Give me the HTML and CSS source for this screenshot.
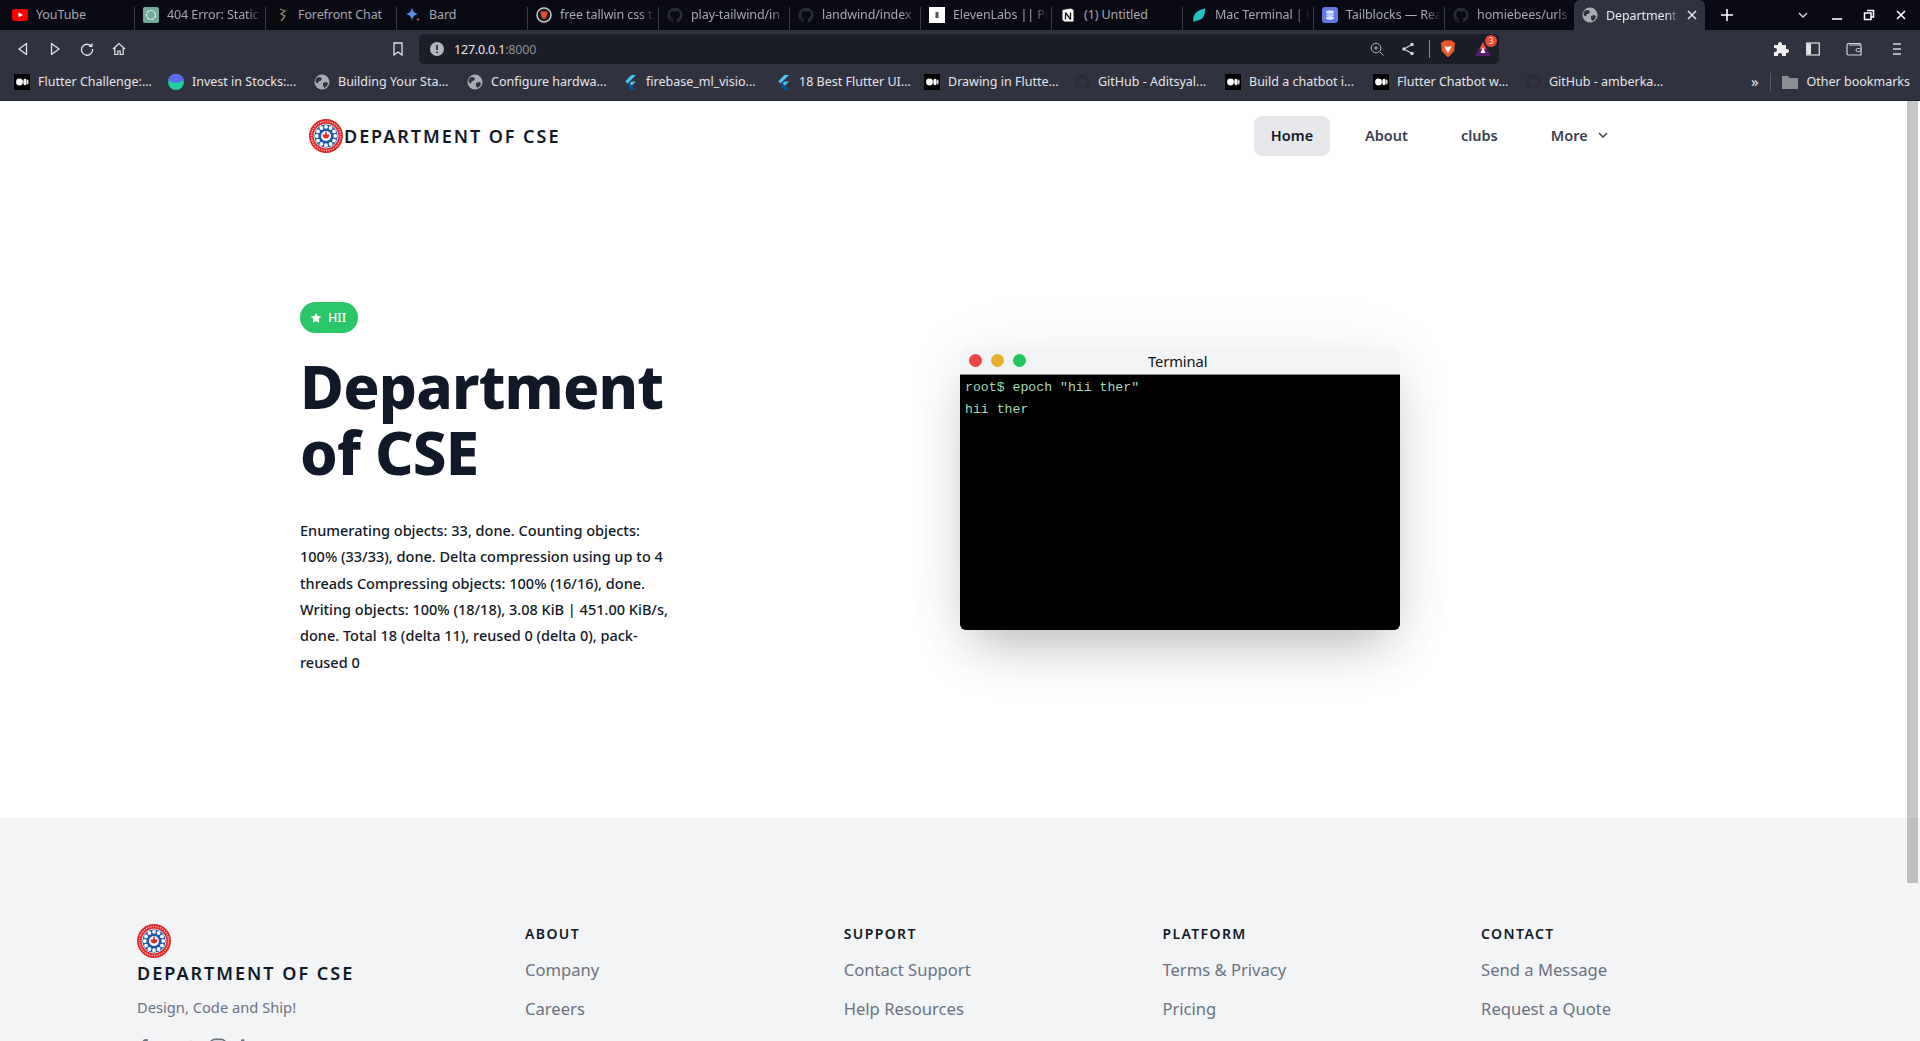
FILE: index.html
```html
<!DOCTYPE html>
<html lang="en">
<head>
<meta charset="utf-8">
<title>Department of CSE</title>
<link rel="stylesheet" href="styles.css">
</head>
<body>
<svg class="defs" aria-hidden="true">
  <defs>
    <symbol id="globe" viewBox="0 0 16 16"><circle cx="8" cy="8" r="7.5" fill="#a9abb2"/><path d="M3 3.5l3-.5 2 1.500-1 2-2.500 1-.5 2L2 8.500 1.500 6zM9 9l3-1 2 1-1 3-2.500 2L9 12z" fill="#30323f"/></symbol>
    <symbol id="github" viewBox="0 0 16 16"><path fill="#2a2c36" d="M8 .5a7.700 7.700 0 0 0-2.400 15c.4.100.5-.2.500-.4v-1.300c-2.100.5-2.600-1-2.600-1-.4-.9-.9-1.100-.9-1.100-.7-.5.100-.5.100-.5.800.100 1.200.8 1.200.8.700 1.200 1.800.8 2.300.6 0-.5.300-.9.500-1.100-1.700-.2-3.500-.9-3.500-3.800 0-.8.300-1.500.8-2-.1-.2-.3-1 .1-2 0 0 .6-.2 2.100.8a7.300 7.300 0 0 1 3.800 0c1.500-1 2.100-.8 2.100-.8.400 1 .2 1.800.1 2 .5.500.8 1.200.8 2 0 2.900-1.800 3.600-3.500 3.800.3.200.5.700.5 1.400v2.100c0 .2.100.5.500.4A7.700 7.700 0 0 0 8 .5z"/></symbol>
    <symbol id="medium" viewBox="0 0 16 16"><rect width="16" height="16" fill="#000"/><circle cx="5.500" cy="8" r="3.400" fill="#fff"/><ellipse cx="11" cy="8" rx="1.700" ry="3.200" fill="#fff"/><ellipse cx="13.800" cy="8" rx=".7" ry="2.800" fill="#fff"/></symbol>
    <symbol id="flutter" viewBox="0 0 16 16"><path d="M9.500 1h4.500L5.500 9.500 3.300 7.300z" fill="#47c5fb"/><path d="M9.500 7.500h4.500L9.800 11.700l-2.200-2.200z" fill="#47c5fb"/><path d="M7.600 9.500l2.200 2.200L14 16H9.500L5.500 11.700z" fill="#00569e"/></symbol>
    <symbol id="dept-logo" viewBox="0 0 34 34">
      <circle cx="17" cy="17" r="17" fill="#e02a2a"/>
      <circle cx="17" cy="17" r="14.600" fill="none" stroke="#f6c5c5" stroke-width="1.400" stroke-dasharray="1.200 1.200"/>
      <circle cx="17" cy="17" r="12" fill="#1a5ba8" stroke="#fff" stroke-width=".8"/>
      <g fill="#fff">
        <circle cx="17" cy="7.800" r="1.900"/><circle cx="21.600" cy="9" r="1.900"/><circle cx="25" cy="12.400" r="1.900"/><circle cx="26.200" cy="17" r="1.900"/><circle cx="25" cy="21.600" r="1.900"/><circle cx="21.600" cy="25" r="1.900"/><circle cx="17" cy="26.200" r="1.900"/><circle cx="12.400" cy="25" r="1.900"/><circle cx="9" cy="21.600" r="1.900"/><circle cx="7.800" cy="17" r="1.900"/><circle cx="9" cy="12.400" r="1.900"/><circle cx="12.400" cy="9" r="1.900"/>
        <circle cx="17" cy="17" r="5" />
      </g>
      <path d="M13.500 15.500h7c0 2.500-1.500 4-3.500 4s-3.500-1.500-3.500-4zM16.200 12.500h1.600v3h-1.600z" fill="#e02a2a"/>
    </symbol>
  </defs>
</svg>

<div class="window">
  <div class="tabbar">
    <div class="tab">
      <svg class="fav" viewBox="0 0 16 16"><rect y="2" width="16" height="12" rx="3" fill="#f00"/><path d="M6.500 5.500L11 8l-4.500 2.500z" fill="#fff"/></svg>
      <span class="tab-title">YouTube</span>
    </div>
    <div class="tab">
      <svg class="fav" viewBox="0 0 16 16"><rect width="16" height="16" rx="2" fill="#74aa9c"/><circle cx="8" cy="8" r="4.500" fill="none" stroke="#e8f3f0" stroke-width="1.200" stroke-dasharray="3 1"/></svg>
      <span class="tab-title tab-fade">404 Error: Static</span>
    </div>
    <div class="tab">
      <svg class="fav" viewBox="0 0 16 16"><rect width="16" height="16" fill="#0a0a0a"/><path d="M6 2l5 2-4 3 4 2-4 5" fill="none" stroke="#8b8b80" stroke-width="1.300"/></svg>
      <span class="tab-title">Forefront Chat</span>
    </div>
    <div class="tab">
      <svg class="fav" viewBox="0 0 16 16"><path d="M7 0c.6 4 2 6 6 7-4 1-5.400 3-6 7-.6-4-2-6-6-7 4-1 5.400-3 6-7z" fill="#5b8def"/><path d="M13 10.500c.2 1.300.7 1.800 2 2-1.300.2-1.800.7-2 2-.2-1.300-.7-1.800-2-2 1.300-.2 1.800-.7 2-2z" fill="#d96570"/></svg>
      <span class="tab-title">Bard</span>
    </div>
    <div class="tab">
      <svg class="fav" viewBox="0 0 16 16"><circle cx="8" cy="8" r="7" fill="#1b1b22" stroke="#c9c9c9" stroke-width="1.500"/><path d="M4.500 4.500h7l-.8 5L8 12.500 5.300 9.500z" fill="#e8502f"/></svg>
      <span class="tab-title tab-fade">free tallwin css t</span>
    </div>
    <div class="tab">
      <svg class="fav"><use href="#github"/></svg>
      <span class="tab-title tab-fade">play-tailwind/in</span>
    </div>
    <div class="tab">
      <svg class="fav"><use href="#github"/></svg>
      <span class="tab-title tab-fade">landwind/index</span>
    </div>
    <div class="tab">
      <svg class="fav" viewBox="0 0 16 16"><rect width="16" height="16" fill="#fff"/><rect x="6.500" y="5" width="3" height="6" fill="#555"/></svg>
      <span class="tab-title tab-fade">ElevenLabs || Pr</span>
    </div>
    <div class="tab">
      <svg class="fav" viewBox="0 0 16 16"><path d="M2 2.500L11 1l3 2v12H4L2 12.500z" fill="#fff" stroke="#111"/><path d="M5.500 5.500v7M5.500 5.500l5 7M10.500 5.500v7" stroke="#111" stroke-width="1.300" fill="none"/></svg>
      <span class="tab-title">(1) Untitled</span>
    </div>
    <div class="tab">
      <svg class="fav" viewBox="0 0 16 16"><path d="M14 1.500c.5 7-2.500 12-9.500 12.500l-2 1C1 9 5 3 14 1.500z" fill="#21c4c0"/></svg>
      <span class="tab-title tab-fade">Mac Terminal | P</span>
    </div>
    <div class="tab">
      <svg class="fav" viewBox="0 0 16 16"><rect width="16" height="16" rx="3" fill="#6478e8"/><ellipse cx="8" cy="5" rx="4" ry="1.800" fill="#dfe4ff"/><ellipse cx="8" cy="8" rx="4" ry="1.800" fill="#b6c0fb"/><ellipse cx="8" cy="11" rx="4" ry="1.800" fill="#dfe4ff"/></svg>
      <span class="tab-title tab-fade">Tailblocks — Rea</span>
    </div>
    <div class="tab tab-last">
      <svg class="fav"><use href="#github"/></svg>
      <span class="tab-title tab-fade">homiebees/urls</span>
    </div>
    <div class="tab tab-active">
      <svg class="fav"><use href="#globe"/></svg>
      <span class="tab-title tab-fade">Department</span>
      <svg class="tab-close" viewBox="0 0 10 10"><path d="M1 1l8 8M9 1l-8 8" stroke="#e6e6ea" stroke-width="1.500"/></svg>
    </div>
    <svg class="tab-plus" viewBox="0 0 12 12"><path d="M6 0v12M0 6h12" stroke="#fff" stroke-width="1.600"/></svg>
    <div class="window-controls">
      <svg class="wc wc-down" viewBox="0 0 12 12"><path d="M2 4l4 4 4-4" fill="none" stroke="#d8d8dc" stroke-width="1.400"/></svg>
      <svg class="wc" viewBox="0 0 12 12"><path d="M1 10h10" stroke="#fff" stroke-width="1.600"/></svg>
      <svg class="wc" viewBox="0 0 12 12"><path d="M4 1.500h6.500V8H8M1.500 4H8v6.500H1.500z" fill="none" stroke="#fff" stroke-width="1.500"/></svg>
      <svg class="wc" viewBox="0 0 12 12"><path d="M2 2l8 8M10 2l-8 8" stroke="#fff" stroke-width="1.600"/></svg>
    </div>
  </div>

  <div class="toolbar">
    <div class="nav-icons">
      <svg class="tool" viewBox="0 0 14 14"><path d="M10.500 1.500v11L3 7z" fill="none" stroke="#e4e4e8" stroke-width="1.300" stroke-linejoin="round"/></svg>
      <svg class="tool" viewBox="0 0 14 14"><path d="M3.500 1.500v11L11 7z" fill="none" stroke="#e4e4e8" stroke-width="1.300" stroke-linejoin="round"/></svg>
      <svg class="tool" viewBox="0 0 14 14"><path d="M11.500 4.500A5.500 5.500 0 1 0 12.500 7" fill="none" stroke="#e4e4e8" stroke-width="1.300"/><path d="M12.500 1v4h-4z" fill="#e4e4e8"/></svg>
      <svg class="tool" viewBox="0 0 14 14"><path d="M1 7l6-5.500L13 7M2.800 6v6.500h3V9h2.400v3.500h3V6" fill="none" stroke="#e4e4e8" stroke-width="1.200"/></svg>
    </div>
    <svg class="bookmark-icon" viewBox="0 0 12 14"><path d="M2 1h8v12L6 10l-4 3z" fill="none" stroke="#e4e4e8" stroke-width="1.300"/></svg>
    <div class="urlbar">
      <svg class="url-info" viewBox="0 0 14 14"><circle cx="7" cy="7" r="7" fill="#b5b6bc"/><path d="M6.200 3h1.600v5H6.200zM6.200 9.400h1.600V11H6.200z" fill="#1b1d27"/></svg>
      <span class="url-text">127.0.0.1<span class="url-port">:8000</span></span>
      <svg class="url-tool url-zoom" viewBox="0 0 14 14"><circle cx="6" cy="6" r="4.800" fill="none" stroke="#aeb0b6"/><path d="M9.500 9.500L13.500 13.500M4 6h4M6 4v4" stroke="#aeb0b6"/></svg>
      <svg class="url-tool url-share" viewBox="0 0 14 14"><path d="M11 2.500L3 7l8 4.500" fill="none" stroke="#d0d1d6" stroke-width="1.200"/><circle cx="11" cy="2.500" r="1.800" fill="#d0d1d6"/><circle cx="3" cy="7" r="1.800" fill="#d0d1d6"/><circle cx="11" cy="11.500" r="1.800" fill="#d0d1d6"/></svg>
      <span class="url-sep"></span>
      <svg class="brave" viewBox="0 0 16 18"><path d="M4 .5h8l1 1.500 2 .5-.8 8.500L8 17.500 1.800 11 1 2.500 3 2z" fill="#ef5a2a"/><path d="M4.500 6L8 7l3.500-1L10 10l-2 3-2-3z" fill="#fff"/></svg>
      <div class="bat">
        <svg class="bat-icon" viewBox="0 0 18 16"><path d="M9 1l8 14H1z" fill="#5b1c6e"/><path d="M9 1l3.500 7h-7z" fill="#ef4b35"/><path d="M9 6l2.500 6h-5z" fill="#fff"/></svg>
        <span class="bat-badge">3</span>
      </div>
    </div>
    <svg class="tool-right tr-ext" viewBox="0 0 16 16"><path d="M1 4h4V3a2 2 0 0 1 4 0v1h4v4h1a2 2 0 0 1 0 4h-1v3H9v-1a2 2 0 0 0-4 0v1H1v-4h1a2 2 0 0 0 0-4H1z" fill="#eeeef0"/></svg>
    <svg class="tool-right tr-side" viewBox="0 0 14 14"><rect x=".7" y="1" width="12.600" height="12" fill="none" stroke="#e4e4e8" stroke-width="1.200"/><rect x="1" y="1.500" width="4" height="11" fill="#e4e4e8"/></svg>
    <svg class="tool-right tr-wallet" viewBox="0 0 16 14"><path d="M14 3V1.500H2.500A1.500 1.500 0 0 0 1 3v8.500A1.500 1.500 0 0 0 2.500 13H15V3H3" fill="none" stroke="#d4d4d8" stroke-width="1.200"/><rect x="10" y="6.500" width="5" height="3" rx="1.500" fill="#30323f" stroke="#d4d4d8"/></svg>
    <svg class="tool-right tr-menu" viewBox="0 0 10 14"><path d="M1 2h8M1 7h8M1 12h8" stroke="#d4d4d8" stroke-width="1.300"/></svg>
  </div>

  <div class="bookmarks">
    <div class="bm bm-1"><svg class="fav"><use href="#medium"/></svg><span>Flutter Challenge:...</span></div>
    <div class="bm bm-2"><svg class="fav" viewBox="0 0 16 16"><circle cx="8" cy="8" r="8" fill="#20d0a0"/><path d="M0 8a8 8 0 0 1 16 0c-3-3-4 1-8 1S3 6 0 8z" fill="#5a6bf0"/></svg><span>Invest in Stocks:...</span></div>
    <div class="bm bm-3"><svg class="fav"><use href="#globe"/></svg><span>Building Your Sta...</span></div>
    <div class="bm bm-4"><svg class="fav"><use href="#globe"/></svg><span>Configure hardwa...</span></div>
    <div class="bm bm-5"><svg class="fav"><use href="#flutter"/></svg><span>firebase_ml_visio...</span></div>
    <div class="bm bm-6"><svg class="fav"><use href="#flutter"/></svg><span>18 Best Flutter UI...</span></div>
    <div class="bm bm-7"><svg class="fav"><use href="#medium"/></svg><span>Drawing in Flutte...</span></div>
    <div class="bm bm-8"><svg class="fav"><use href="#github"/></svg><span>GitHub - Aditsyal...</span></div>
    <div class="bm bm-9"><svg class="fav"><use href="#medium"/></svg><span>Build a chatbot i...</span></div>
    <div class="bm bm-10"><svg class="fav"><use href="#medium"/></svg><span>Flutter Chatbot w...</span></div>
    <div class="bm bm-11"><svg class="fav"><use href="#github"/></svg><span>GitHub - amberka...</span></div>
    <div class="bm-end">
      <span class="bm-more">»</span>
      <span class="bm-sep"></span>
      <svg class="fav" viewBox="0 0 16 16"><path d="M0 2h6l1.500 2H16v11H0z" fill="#8c8d92"/></svg>
      <span>Other bookmarks</span>
    </div>
  </div>

  <div class="page">
    <header class="site-nav">
      <a class="brand">
        <svg class="brand-logo"><use href="#dept-logo"/></svg>
        <span class="brand-name">DEPARTMENT OF CSE</span>
      </a>
      <nav class="site-links">
        <a class="site-link is-current">Home</a>
        <a class="site-link link-about">About</a>
        <a class="site-link link-clubs">clubs</a>
        <a class="site-link link-more">More
          <svg class="chev" viewBox="0 0 10 6"><path d="M1 1l4 4 4-4" fill="none" stroke="#374151" stroke-width="1.500"/></svg>
        </a>
      </nav>
    </header>

    <main class="hero">
      <section class="hero-copy">
        <span class="pill">
          <svg class="pill-star" viewBox="0 0 14 14"><path d="M7 .8l1.900 3.900 4.300.6-3.100 3 .7 4.300L7 10.600l-3.800 2 .7-4.300-3.100-3 4.300-.6z" fill="#fff"/></svg>
          HII
        </span>
        <h1 class="hero-title">Department of CSE</h1>
        <p class="hero-text">Enumerating objects: 33, done. Counting objects: 100% (33/33), done. Delta compression using up to 4 threads Compressing objects: 100% (16/16), done. Writing objects: 100% (18/18), 3.08 KiB | 451.00 KiB/s, done. Total 18 (delta 11), reused 0 (delta 0), pack-reused 0</p>
      </section>
      <section class="terminal">
        <div class="term-bar">
          <div class="term-dots">
            <span class="dot dot-red"></span>
            <span class="dot dot-yellow"></span>
            <span class="dot dot-green"></span>
          </div>
          <span class="term-title">Terminal</span>
        </div>
        <div class="term-body">
          <p class="term-line">root$ epoch "hii ther"</p>
          <p class="term-line">hii ther</p>
        </div>
      </section>
    </main>

    <footer class="site-footer">
      <div class="foot-brand">
        <svg class="brand-logo"><use href="#dept-logo"/></svg>
        <div class="foot-name">DEPARTMENT OF CSE</div>
        <p class="foot-tag">Design, Code and Ship!</p>
        <div class="socials">
          <svg class="social social-first" viewBox="0 0 20 20"><path d="M12 1h-2a4 4 0 0 0-4 4v3H4v3h2v8h3v-8h3l.5-3H9V5a1 1 0 0 1 1-1h2z" fill="#6b7280"/></svg>
          <svg class="social" viewBox="0 0 20 20"><path d="M19 4c-.7.3-1.400.5-2 .6A3.600 3.600 0 0 0 10.800 8 10 10 0 0 1 3 4s-3 6 4 10a10 10 0 0 1-6 2c9 5 18 0 18-11z" fill="#6b7280"/></svg>
          <svg class="social" viewBox="0 0 20 20"><rect x="1.500" y="1.500" width="17" height="17" rx="5" fill="none" stroke="#6b7280" stroke-width="2"/></svg>
          <svg class="social" viewBox="0 0 20 20"><path d="M1 7h4v12H1zM3 1a2 2 0 1 1 0 4 2 2 0 0 1 0-4zM8 7h4v2c1-2 7-3 7 3v7h-4v-6c0-3-3-2-3 0v6H8z" fill="#6b7280"/></svg>
        </div>
      </div>
      <div class="foot-col">
        <h2 class="foot-head">ABOUT</h2>
        <a class="foot-link">Company</a>
        <a class="foot-link">Careers</a>
      </div>
      <div class="foot-col">
        <h2 class="foot-head">SUPPORT</h2>
        <a class="foot-link">Contact Support</a>
        <a class="foot-link">Help Resources</a>
      </div>
      <div class="foot-col">
        <h2 class="foot-head">PLATFORM</h2>
        <a class="foot-link">Terms &amp; Privacy</a>
        <a class="foot-link">Pricing</a>
      </div>
      <div class="foot-col">
        <h2 class="foot-head">CONTACT</h2>
        <a class="foot-link">Send a Message</a>
        <a class="foot-link">Request a Quote</a>
      </div>
    </footer>
    <div class="scroll-thumb"></div>
  </div>
</div>
</body>
</html>
```

FILE: styles.css
```css
* { box-sizing: border-box; }
html, body { margin: 0; height: 100%; overflow: hidden; }
body { font-family: "Noto Sans", "Open Sans", sans-serif; background: #fff; }
.defs { position: absolute; width: 0; height: 0; }
svg { display: block; flex: none; }

.window { height: 1041px; display: flex; flex-direction: column; overflow: hidden; }

/* tab strip */
.tabbar { height: 30px; flex: none; background: #0a0a14; display: flex; padding-left: 4px; position: relative; }
.tab { width: 131px; height: 23px; margin-top: 7px; padding: 0 3px 8px 8px; display: flex; align-items: center; gap: 8px; border-right: 1px solid #3a3c48; color: #a6a8b0; font-size: 12.5px; letter-spacing: -.1px; overflow: hidden; }
.tab-last { border-right: 0; width: 129px; }
.fav { width: 16px; height: 16px; }
.tab-title { white-space: nowrap; overflow: hidden; flex: 1; }
.tab-fade { -webkit-mask-image: linear-gradient(to right, #000 84%, transparent); mask-image: linear-gradient(to right, #000 84%, transparent); }
.tab-active { margin-top: 0; height: 30px; padding: 0 8px; background: #30323f; border: 0; border-radius: 6px 6px 0 0; color: #e8e8ec; }
.tab-close { width: 10px; height: 10px; }
.tab-plus { width: 12px; height: 12px; margin: 9px 0 0 16px; }
.window-controls { margin-left: auto; display: flex; gap: 20px; padding: 9px 13px 0 0; }
.wc { width: 12px; height: 12px; }
.wc-down { margin-right: 2px; }

/* toolbar */
.toolbar { height: 37px; flex: none; background: #30323f; display: flex; align-items: flex-start; padding-top: 4px; }
.nav-icons { display: flex; gap: 18px; padding: 8px 0 0 16px; }
.tool { width: 14px; height: 14px; }
.bookmark-icon { width: 12px; height: 14px; margin: 8px 0 0 266px; }
.urlbar { width: 1080px; height: 30px; margin-left: 15px; background: #1b1d27; border-radius: 5px; display: flex; align-items: center; padding-left: 11px; }
.url-info { width: 14px; height: 14px; }
.url-text { margin-left: 10px; color: #e8e8ec; font-size: 12.5px; letter-spacing: -.2px; }
.url-port { color: #8e9097; }
.url-tool { width: 14px; height: 14px; }
.url-zoom { margin-left: auto; }
.url-share { margin-left: 17px; }
.url-sep { width: 1px; height: 18px; background: #8a8c94; margin-left: 14px; }
.brave { width: 16px; height: 18px; margin-left: 10px; }
.bat { position: relative; margin: 0 7px 0 18px; }
.bat-icon { width: 18px; height: 16px; }
.bat-badge { position: absolute; top: -6px; right: -5px; width: 12px; height: 12px; border-radius: 50%; background: #ef4535; color: #fff; font-size: 8px; line-height: 12px; text-align: center; }
.tr-ext { width: 16px; height: 16px; margin: 7px 0 0 274px; }
.tr-side { width: 14px; height: 14px; margin: 8px 0 0 17px; }
.tr-wallet { width: 16px; height: 14px; margin: 8px 0 0 26px; }
.tr-menu { width: 10px; height: 14px; margin: 8px 0 0 30px; }

/* bookmarks */
.bookmarks { height: 34px; flex: none; background: #30323f; border-bottom: 1px solid #23252f; display: flex; align-items: center; padding: 0 0 4px 14px; color: #e6e6ea; font-size: 12.5px; white-space: nowrap; }
.bm { display: flex; align-items: center; gap: 8px; overflow: hidden; }
.bm-1 { width: 154px; }
.bm-2 { width: 146px; }
.bm-3 { width: 153px; }
.bm-4 { width: 155px; }
.bm-5 { width: 153px; }
.bm-6 { width: 149px; }
.bm-7 { width: 150px; }
.bm-8 { width: 151px; }
.bm-9 { width: 148px; }
.bm-10 { width: 152px; }
.bm-11 { width: 152px; }
.bm-end { margin-left: auto; display: flex; align-items: center; gap: 9px; padding-right: 10px; }
.bm-more { font-size: 15px; line-height: 1; margin-right: 2px; }
.bm-sep { width: 1px; height: 18px; background: #5a5c66; margin: 0 2px 0 0; }

/* page */
.page { flex: 1; position: relative; display: flex; flex-direction: column; overflow: hidden; background: #fff; }
.scroll-thumb { position: absolute; top: 0; right: 2px; width: 11px; height: 782px; background: rgba(0, 0, 0, .22); }

.site-nav { height: 70px; flex: none; display: flex; align-items: center; justify-content: space-between; padding: 0 0 0 309px; }
.brand { display: flex; align-items: center; gap: 1px; }
.brand-logo { width: 34px; height: 34px; }
.brand-name { font-size: 18px; font-weight: 600; letter-spacing: 1.950px; color: #111827; }
.site-links { display: flex; align-items: center; width: 666px; }
.site-link { height: 40px; font-size: 14.500px; font-weight: 600; color: #374151; line-height: 38px; }
.is-current { width: 76px; background: #e5e7eb; border-radius: 8px; color: #111827; text-align: center; }
.link-about { margin-left: 35px; }
.link-clubs { margin-left: 53px; }
.link-more { margin-left: 53px; padding-bottom: 2px; display: flex; align-items: center; gap: 10px; }
.chev { width: 10px; height: 6px; }

.hero { height: 647px; flex: none; display: flex; align-items: center; padding: 0 0 11.400px 300px; }
.hero-copy { width: 373px; flex: none; }
.pill { display: inline-flex; align-items: center; gap: 6px; height: 31px; padding: 0 12px 0 10px; border-radius: 16px; background: #2ac769; color: #fff; font-size: 12.500px; font-weight: 500; }
.pill-star { width: 12px; height: 12px; }
.hero-title { margin: 19.800px 0 0; font-size: 60px; line-height: 66px; font-weight: 800; color: #111827; letter-spacing: -.8px; }
.hero-text { margin: 31.600px 0 0; font-size: 14.500px; line-height: 26.400px; font-weight: 500; color: #111827; }

.terminal { width: 440px; height: 281px; margin: 2px 0 0 287px; flex: none; display: flex; flex-direction: column; border-radius: 6px; overflow: hidden; box-shadow: 0 25px 50px -12px rgba(0, 0, 0, .25), 0 0 70px rgba(0, 0, 0, .05); }
.term-bar { height: 26px; flex: none; background: #f3f4f6; border-bottom: 1px solid #8d8d8d; display: flex; align-items: center; position: relative; padding: 0 0 2px 9px; }
.term-dots { display: flex; gap: 9px; }
.dot { width: 13px; height: 13px; border-radius: 50%; }
.dot-red { background: #ef4444; }
.dot-yellow { background: #e9ae2e; }
.dot-green { background: #22c55e; }
.term-title { margin-left: 122px; font-size: 14.700px; color: #111; letter-spacing: -.1px; }
.term-body { flex: 1; background: #000; padding: 2px 5px; }
.term-line { margin: 0; font-family: "Liberation Mono", monospace; font-size: 13.200px; line-height: 22px; color: #a5d8b5; }

.site-footer { flex: 1; background: #f3f4f6; display: grid; grid-template-columns: 388px repeat(4, 318.700px); padding: 106px 0 0 137px; align-items: start; }
.foot-brand { display: flex; flex-direction: column; }
.foot-name { margin-top: 1px; font-size: 18px; line-height: 28px; font-weight: 600; letter-spacing: 2px; color: #111827; }
.foot-tag { margin: 10px 0 0; font-size: 14.700px; line-height: 20px; color: #6b7280; }
.socials { display: flex; gap: 13px; margin-top: 21px; }
.social { width: 18px; height: 18px; }
.social-first { margin-right: 10px; }
.foot-col { display: flex; flex-direction: column; }
.foot-head { margin: 0; font-size: 14px; line-height: 20px; font-weight: 600; letter-spacing: 1.400px; color: #111827; }
.foot-link { margin-top: 18px; font-size: 16.600px; line-height: 21px; color: #6b7280; }
.foot-head + .foot-link { margin-top: 15px; }
```
